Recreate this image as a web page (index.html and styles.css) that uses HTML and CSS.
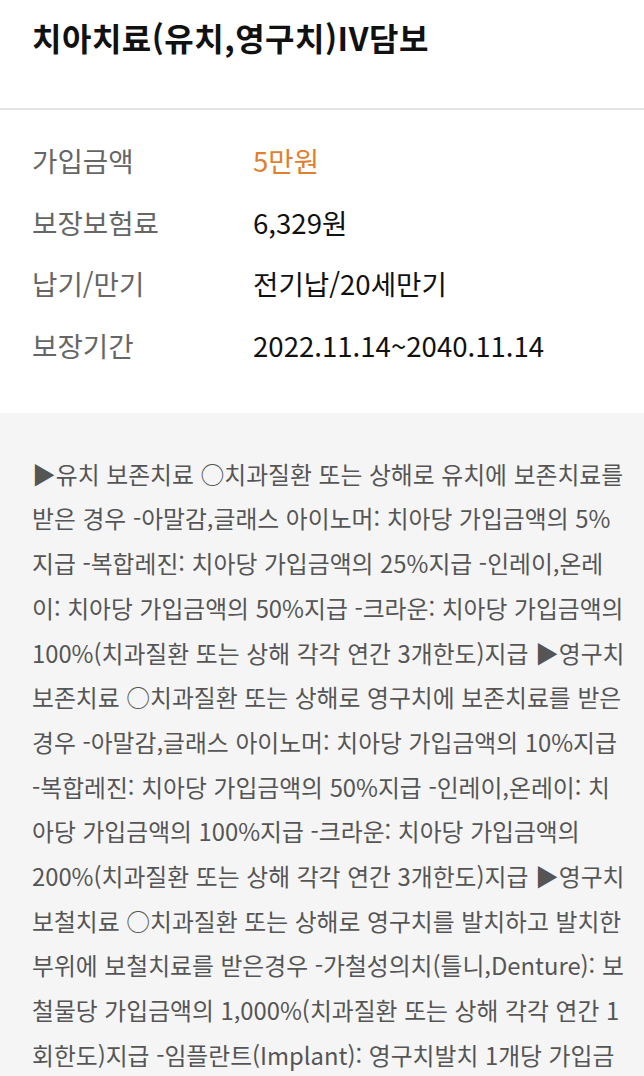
FILE: index.html
```html
<!DOCTYPE html>
<html lang="ko">
<head>
<meta charset="utf-8">
<title>치아치료(유치,영구치)IV담보</title>
<link rel="stylesheet" href="styles.css">
</head>
<body>
<header class="head">
  <h1 class="title">치아치료(유치,영구치)IV담보</h1>
</header>
<section class="info">
  <dl class="rows">
    <div class="row"><dt>가입금액</dt><dd class="accent">5만원</dd></div>
    <div class="row"><dt>보장보험료</dt><dd>6,329원</dd></div>
    <div class="row"><dt>납기/만기</dt><dd>전기납/20세만기</dd></div>
    <div class="row"><dt>보장기간</dt><dd>2022.11.14~2040.11.14</dd></div>
  </dl>
</section>
<section class="detail">
  <p class="desc">▶유치 보존치료 ○치과질환 또는 상해로 유치에 보존치료를<br>받은 경우 -아말감,글래스 아이노머: 치아당 가입금액의 5%<br>지급 -복합레진: 치아당 가입금액의 25%지급 -인레이,온레<br>이: 치아당 가입금액의 50%지급 -크라운: 치아당 가입금액의<br>100%(치과질환 또는 상해 각각 연간 3개한도)지급 ▶영구치<br>보존치료 ○치과질환 또는 상해로 영구치에 보존치료를 받은<br>경우 -아말감,글래스 아이노머: 치아당 가입금액의 10%지급<br>-복합레진: 치아당 가입금액의 50%지급 -인레이,온레이: 치<br>아당 가입금액의 100%지급 -크라운: 치아당 가입금액의<br>200%(치과질환 또는 상해 각각 연간 3개한도)지급 ▶영구치<br>보철치료 ○치과질환 또는 상해로 영구치를 발치하고 발치한<br>부위에 보철치료를 받은경우 -가철성의치(틀니,Denture): 보<br>철물당 가입금액의 1,000%(치과질환 또는 상해 각각 연간 1<br>회한도)지급 -임플란트(Implant): 영구치발치 1개당 가입금<br>액의 2,000%(치과질환 또는 상해 각각 연간 3개한도)지급<br>-브릿지(Bridge): 영구치발치 1개당 가입금액의 1,000%(치<br>과질환 또는 상해 각각 연간 3개한도)지급</p>
</section>
</body>
</html>
```
FILE: styles.css
```css
html, body {
  margin: 0;
  padding: 0;
}
body {
  font-family: "Noto Sans CJK KR", "Noto Sans", sans-serif;
  background: #ffffff;
  color: #111;
}
.head {
  height: 108px;
  border-bottom: 2px solid #e4e4e4;
  display: flex;
  align-items: flex-start;
  padding: 0 32px;
}
.title {
  margin: 0;
  padding-top: 14px;
  font-size: 32px;
  line-height: 46px;
  font-weight: 700;
  letter-spacing: 0.5px;
  color: #111;
}
.info {
  padding: 19px 32px 37px;
  background: #fff;
}
.rows {
  margin: 0;
}
.row {
  display: flex;
  height: 61.7px;
  align-items: center;
  font-size: 27.6px;
}
.row dt {
  width: 221px;
  color: #666;
  font-weight: 400;
}
.row dd {
  margin: 0;
  color: #111;
}
.row dd.accent {
  color: #e07f2e;
}
.detail {
  background: #f5f5f5;
  padding: 39px 8px 40px 32px;
}
.desc {
  margin: 0;
  font-size: 23.8px;
  line-height: 44.7px;
  color: #555;
  white-space: nowrap;
}
```
